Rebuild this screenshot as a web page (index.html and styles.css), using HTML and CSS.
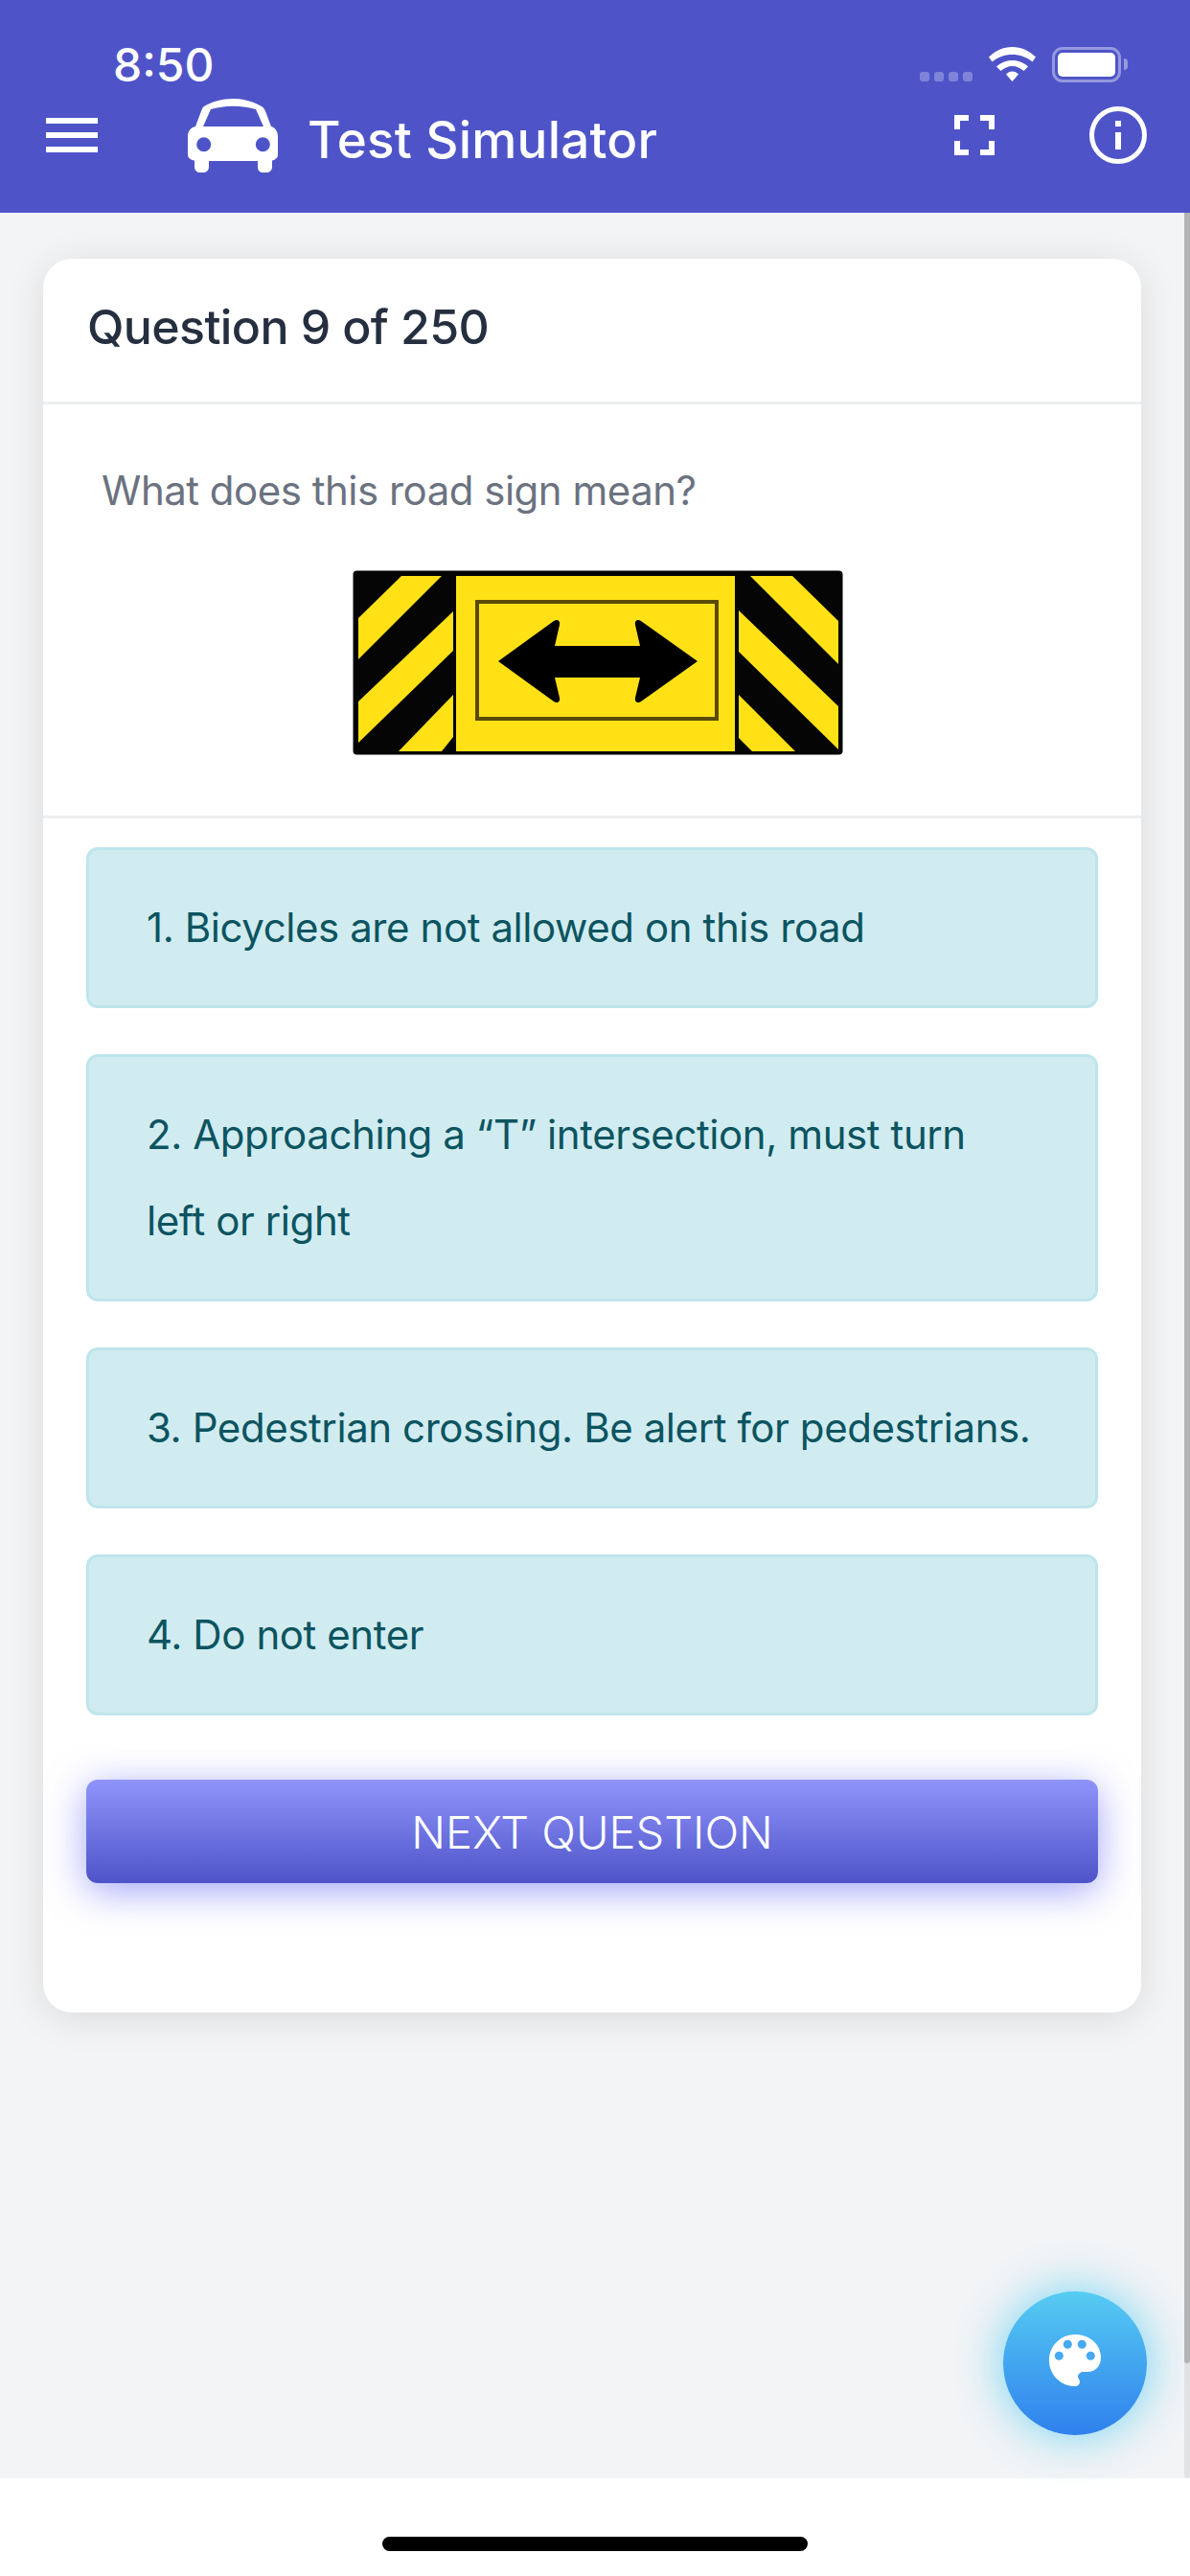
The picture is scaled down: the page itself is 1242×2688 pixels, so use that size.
FILE: index.html
```html
<!DOCTYPE html>
<html lang="en">
<head>
    <meta charset="UTF-8">
    <meta name="viewport" content="width=device-width, initial-scale=1.0">
    <title>Test Simulator</title>
    <link rel="stylesheet" href="styles.css">
</head>
<body>
    <!-- Header with status bar -->
    <header class="app-header">
        <div class="status-bar">
            <span class="status-time">8:50</span>
            <div class="status-icons">
                <div class="signal-dots"><i></i><i></i><i></i><i></i></div>
                <svg class="wifi" viewBox="0 0 49 36">
                    <path d="M24.500 0C15 0 7 4 0 10.500L3.500 15.500C9.500 10.500 16.500 8 24.500 8S39.500 10.500 45.500 15.500L49 10.500C42 4 34 0 24.500 0z" fill="#fff"/>
                    <path d="M24.500 14C18 14 12.500 16.500 8 20.500L12.500 25C16 22 20 20 24.500 20S33 22 36.500 25L41 20.500C36.500 16.500 31 14 24.500 14z" fill="#fff"/>
                    <path d="M24.500 25.500C22 25.500 20 26.500 18 28.500L24.500 36L31 28.500C29 26.500 27 25.500 24.500 25.500z" fill="#fff"/>
                </svg>
                <div class="battery"><div class="battery-level"></div></div>
                <div class="battery-cap"></div>
            </div>
        </div>
        <div class="toolbar">
            <div class="hamburger"><i></i><i></i><i></i></div>
            <svg class="car" viewBox="0 0 95 77">
                <path fill-rule="evenodd" fill="#fff" d="M47 0C58 0 69 3 77 8C79 9 80 11 81 13L87 29C91 30 94 34 94 39V58C94 62 91 64 88 64.500V71C88 75 85 77 82 77H79C75 77 73 75 73 71V65H22V71C22 75 19 77 16 77H13C10 77 7 75 7 71V64.500C3 64 0 62 0 58V39C0 34 3 30 8 29L14 13C15 11 15 9 17 8C25 3 36 0 47 0zM24 11L16 29H79L71 11C63 9 55 7.700 47 7.700S31 9 24 11z"/>
                <circle cx="16.700" cy="47.700" r="7.500" fill="#4e54c8"/>
                <circle cx="78.300" cy="47.700" r="7.500" fill="#4e54c8"/>
            </svg>
            <h1 class="app-title">Test Simulator</h1>
            <svg class="fullscreen" viewBox="0 0 42 42">
                <path d="M0 15V0h15v6H6v9zM27 0h15v15h-6V6h-9zM42 27v15H27v-6h9v-9zM15 42H0V27h6v9h9z" fill="#fff"/>
            </svg>
            <svg class="info" viewBox="0 0 60 60">
                <circle cx="30" cy="30" r="27.500" fill="none" stroke="#fff" stroke-width="5"/>
                <rect x="27" y="15" width="6" height="6" fill="#fff"/>
                <rect x="27" y="27" width="6" height="18" fill="#fff"/>
            </svg>
        </div>
    </header>

    <main class="content">
        <div class="card">
            <div class="card-header">Question 9 of 250</div>

            <div class="question">
                <p class="question-text">What does this road sign mean?</p>
                <div class="sign-wrap">
                    <!-- Road sign -->
                    <svg class="sign" viewBox="0 0 512 193">
                        <rect x="0.500" y="0.500" width="511" height="192" rx="4" fill="#050505"/>
                        <rect x="108" y="6" width="291" height="183" fill="#ffe116"/>
                        <rect x="130" y="33" width="250" height="122" fill="none" stroke="#5a4a06" stroke-width="4"/>
                        <path d="M152 95l58-42c3-2 7-1 6 4l-5 22h89l-5-22c-1-5 3-6 6-4l59 42-59 42c-3 2-7 1-6-4l5-21h-89l5 21c1 5-3 6-6 4z" fill="#000"/>
                        <path d="M51 6h42L6 93V50zM105 43v41L6 180v-43zM105 130v44l-12 15H48zM415 6h44l48 47v45zM403 42l104 100v45L403 85zM403 130l59 59h-45l-14-14z" fill="#ffe116"/>
                    </svg>
                </div>
            </div>

            <div class="answers">
                <div class="option">1. Bicycles are not allowed on this road</div>
                <div class="option">2. Approaching a “T” intersection, must turn left or right</div>
                <div class="option">3. Pedestrian crossing. Be alert for pedestrians.</div>
                <div class="option">4. Do not enter</div>
                <button class="next-btn">NEXT QUESTION</button>
            </div>
        </div>

        <button class="fab">
            <svg class="palette" viewBox="0 0 54 54">
                <path d="M27 0c15 0 27 10 27 24 0 9-6 15-14 15h-4c-3 0-6 2-6 5 0 2 2 3 2 5 0 3-2 5-5 5C12 54 0 42 0 27S12 0 27 0z" fill="#fff"/>
                <circle cx="10.300" cy="22.300" r="4.500" fill="#46a9f1"/>
                <circle cx="19.300" cy="10.300" r="4.500" fill="#46a9f1"/>
                <circle cx="34.300" cy="10.300" r="4.500" fill="#46a9f1"/>
                <circle cx="43.300" cy="22.300" r="4.500" fill="#46a9f1"/>
            </svg>
        </button>
        <div class="scrollbar"><div class="scrollbar-thumb"></div></div>
    </main>

    <footer class="bottom-bar"><div class="home-indicator"></div></footer>
</body>
</html>
```

FILE: styles.css
```css
/* Page */
body {
    margin: 0;
    height: 2688px;
    overflow: hidden;
    display: flex;
    flex-direction: column;
    font-family: Inter, "Noto Sans", sans-serif;
    background: #fff;
}

/* Header */
.app-header {
    height: 222px;
    box-sizing: border-box;
    padding-top: 42px;
    background: #4e54c8;
    color: #fff;
}

.status-bar {
    display: flex;
    justify-content: space-between;
    align-items: center;
    height: 50px;
    padding: 0 65px 0 118px;
}

.status-time {
    margin-top: 2px;
    font-size: 48px;
    font-weight: 500;
    line-height: 50px;
}

.status-icons {
    display: flex;
    align-items: center;
}

.signal-dots {
    display: flex;
    gap: 5px;
    margin: 26px 17px 0 0;
}

.signal-dots i {
    width: 10px;
    height: 10px;
    border-radius: 3px;
    background: #7f84d9;
}

.wifi {
    width: 49px;
    height: 36px;
    margin-right: 17px;
}

.battery {
    width: 72px;
    height: 37px;
    box-sizing: border-box;
    padding: 3px;
    border: 3px solid #9599de;
    border-radius: 11px;
}

.battery-level {
    height: 100%;
    border-radius: 5px;
    background: #fff;
}

.battery-cap {
    width: 4px;
    height: 12px;
    margin-left: 3px;
    border-radius: 0 4px 4px 0;
    background: #9599de;
}

.toolbar {
    display: flex;
    align-items: center;
    height: 80px;
    margin-top: 9px;
    padding-left: 48px;
}

.hamburger {
    display: flex;
    flex-direction: column;
    gap: 9px;
    width: 54px;
}

.hamburger i {
    height: 6px;
    background: #fff;
}

.car {
    width: 95px;
    height: 77px;
    margin-left: 94px;
}

.app-title {
    margin: 10px 0 0 30px;
    width: 675px;
    font-size: 53px;
    font-weight: 500;
    letter-spacing: 0.2px;
}

.fullscreen {
    width: 42px;
    height: 42px;
}

.info {
    width: 60px;
    height: 60px;
    margin-left: 99px;
}

/* Content */
.content {
    position: relative;
    flex: 1;
    padding: 48px 51px 0 45px;
    background: #f3f4f6;
}

.card {
    height: 1830px;
    box-sizing: border-box;
    border-radius: 30px;
    background: #fff;
    box-shadow: 0 6px 40px rgba(0, 0, 0, 0.1);
}

.card-header {
    height: 149px;
    padding-left: 46px;
    border-bottom: 3px solid #eeeff1;
    font-size: 50px;
    font-weight: 450;
    letter-spacing: -0.6px;
    line-height: 143px;
    color: #252f3f;
}

.question {
    height: 432px;
    box-sizing: border-box;
    padding: 0 49px 0 61px;
    border-bottom: 3px solid #eeeff1;
}

.question-text {
    margin: 0;
    padding-top: 60px;
    font-size: 42px;
    letter-spacing: -0.5px;
    line-height: 60px;
    color: #6b7280;
}

.sign-wrap {
    display: flex;
    justify-content: center;
    margin-top: 53px;
}

.sign {
    width: 512px;
    height: 193px;
    filter: blur(0.6px);
}

.answers {
    display: flex;
    flex-direction: column;
    gap: 48px;
    padding: 30px 45px 0;
}

.option {
    padding: 36px 65px 36px 60px;
    border: 3px solid #bee5eb;
    border-radius: 12px;
    background: #d1ecf1;
    font-size: 42px;
    letter-spacing: -0.42px;
    line-height: 90px;
    color: #0c5460;
}

.next-btn {
    height: 108px;
    margin-top: 19px;
    border: none;
    border-radius: 12px;
    background: linear-gradient(to bottom, #8f94fb, #4e54c8);
    box-shadow: 0 8px 40px rgba(100, 106, 245, 0.6);
    font-family: inherit;
    font-size: 47px;
    font-weight: 300;
    color: #fff;
}

.fab {
    position: absolute;
    left: 1047px;
    top: 2169px;
    display: flex;
    align-items: center;
    justify-content: center;
    width: 150px;
    height: 150px;
    padding: 0;
    border: none;
    border-radius: 50%;
    background: linear-gradient(to bottom, #56ccf2, #2f80ed);
    box-shadow: 0 0 50px rgba(86, 204, 242, 0.85);
}

.palette {
    width: 54px;
    height: 54px;
    margin-top: -6px;
}

.scrollbar {
    position: absolute;
    top: 0;
    right: 0;
    bottom: 0;
    width: 6px;
    border-radius: 0 0 3px 3px;
    background: #e1e2e4;
}

.scrollbar-thumb {
    height: 2244px;
    border-radius: 0 0 3px 3px;
    background: #b3b4b6;
}

/* Bottom bar */
.bottom-bar {
    display: flex;
    justify-content: center;
    height: 102px;
    box-sizing: border-box;
    padding-top: 61px;
    background: #fff;
}

.home-indicator {
    width: 444px;
    height: 15px;
    border-radius: 8px;
    background: #000;
}
```
